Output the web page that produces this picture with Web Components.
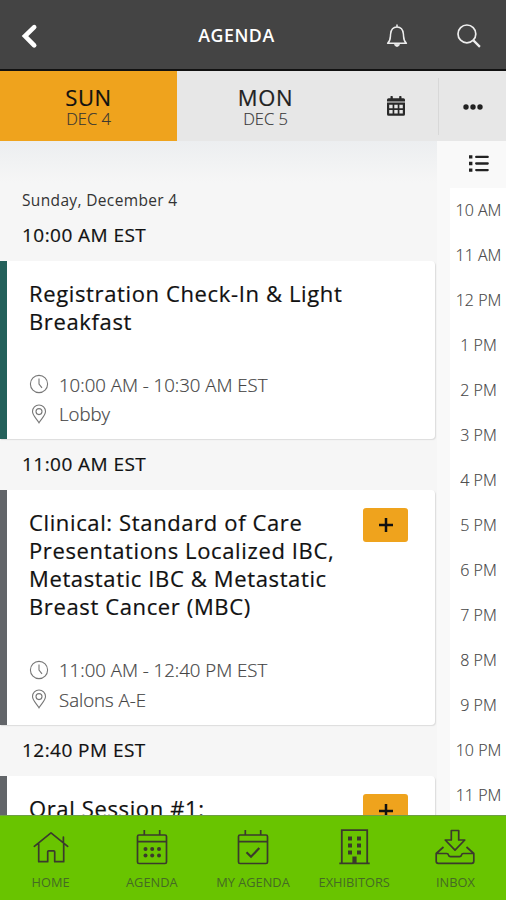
<!DOCTYPE html>
<html lang="en">
<head>
<meta charset="utf-8">
<title>Agenda</title>
<style>
html,body{margin:0;height:100%;overflow:hidden}
body{font-family:"Open Sans","Noto Sans",sans-serif;color:#111;background:#f6f6f6}
</style>
</head>
<body>
<agenda-app></agenda-app>
<script>
const ICONS = {
  back:'<svg width="18" height="28" viewBox="0 0 18 28"><path d="M13.200 5.200 4 14l9.200 9.400" fill="none" stroke="#fff" stroke-width="4.600" stroke-linecap="round"/></svg>',
  bell:'<svg width="24" height="26" viewBox="0 0 24 26" fill="none" stroke="#eee" stroke-width="1.500" stroke-linejoin="round"><path d="M12 1.500v2.200M2.600 20.200c3.400-3 2.600-5.800 3-9.200C6 6.300 8.400 3.900 12 3.900s6 2.400 6.400 7.100c.4 3.400-.4 6.200 3 9.200z"/><path d="M9.600 21.200c.2 3 4.600 3 4.800 0z" fill="#eee" stroke-width=".8"/></svg>',
  search:'<svg width="26" height="26" viewBox="0 0 26 26" fill="none" stroke="#eee"><circle cx="10.900" cy="10.900" r="8.900" stroke-width="1.700"/><path d="m17.400 17.400 6.500 6.500" stroke-width="2.200"/></svg>',
  cal:'<svg width="18" height="20" viewBox="0 0 18 20"><path fill="#292929" fill-rule="evenodd" d="M1.500 2.200h2V.6c0-.8 2.300-.8 2.300 0v1.600h6.400V.6c0-.8 2.300-.8 2.300 0v1.600h2q1.500 0 1.500 1.500V5.500H0V3.700q0-1.500 1.500-1.500zM0 6.500h18v11.700q0 1.500-1.500 1.500h-15Q0 19.700 0 18.200zM2.200 8.700v3.500h3.400V8.700zM7.300 8.700v3.500h3.400V8.700zM12.400 8.700v3.500h3.400V8.700zM2.200 14v3.500h3.400V14zM7.300 14v3.500h3.400V14zM12.400 14v3.500h3.400V14z"/></svg>',
  dots:'<svg width="20" height="6" viewBox="0 0 20 6" fill="#222"><circle cx="3" cy="3" r="2.700"/><circle cx="10" cy="3" r="2.700"/><circle cx="17" cy="3" r="2.700"/></svg>',
  list:'<svg width="20" height="17" viewBox="0 0 20 17" fill="#222"><path d="M0 .2h3.400v3.400H0zM0 6.800h3.400v3.400H0zM0 13.400h3.400v3.400H0z"/><path d="M7.200 1.900h11.500M7.200 8.500h11.500M7.200 15.100h11.500" stroke="#222" stroke-width="2.300" stroke-linecap="round"/></svg>',
  clock:'<svg width="20" height="20" viewBox="0 0 20 20" fill="none" stroke="#777" stroke-width="1.100"><circle cx="10" cy="10" r="8.600"/><path d="M10 4.500V10l3 3.800"/></svg>',
  pin:'<svg width="20" height="20" viewBox="0 0 20 20" fill="none" stroke="#777" stroke-width="1.100"><path d="M10 18.800C8 15 3.500 11.500 3.500 7.500a6.500 6.500 0 0 1 13 0C16.500 11.500 12 15 10 18.800z"/><circle cx="10" cy="7.600" r="3"/></svg>',
  plus:'<svg width="14" height="14" viewBox="0 0 14 14"><path d="M7 0v14M0 7h14" stroke="#111" stroke-width="2.500"/></svg>',
  home:'<svg width="38" height="38" viewBox="0 0 38 38" fill="none" stroke="#3b3a2c" stroke-width="1.700" stroke-linejoin="round" stroke-linecap="round"><path d="M2.300 17.300 19 3.800l16.700 13.500M6.700 14.500v18.200h9v-9.900q0-1 1-1h5q1 0 1 1v9.900h9V14.500M31.400 13.300V8"/></svg>',
  agenda:'<svg width="38" height="38" viewBox="0 0 38 38" fill="none" stroke="#3b3a2c" stroke-width="1.700"><rect x="4.500" y="6" width="29" height="28.500" rx="1.500"/><path d="M4.500 12.600h29M11.300 1v5M26.700 1v5"/><g fill="#3b3a2c" stroke="none"><circle cx="12.500" cy="20" r="2"/><circle cx="19.200" cy="20" r="2"/><circle cx="26" cy="20" r="2"/><circle cx="12.500" cy="26.600" r="2"/><circle cx="19.200" cy="26.600" r="2"/><circle cx="26" cy="26.600" r="2"/></g></svg>',
  mine:'<svg width="38" height="38" viewBox="0 0 38 38" fill="none" stroke="#3b3a2c" stroke-width="1.700"><rect x="4.500" y="6" width="29" height="28.500" rx="1.500"/><path d="M4.500 12.600h29M11.300 1v5M26.700 1v5"/><path d="m12.500 23.300 4.500 4.400 8.300-8.600" stroke-width="2.200"/></svg>',
  building:'<svg width="38" height="38" viewBox="0 0 38 38"><path d="M6.800 34V1.200h25.400V34M4.300 34.400h30.400" fill="none" stroke="#3b3a2c" stroke-width="1.800"/><path fill="#3b3a2c" d="M13 7.500h4v4h-4zM22 7.500h4v4h-4zM13 14.500h4v4h-4zM22 14.500h4v4h-4zM13 21.500h4v4h-4zM22 21.500h4v4h-4zM17.400 27.500h4.200v7h-4.200z"/></svg>',
  inbox:'<svg width="40" height="38" viewBox="0 0 40 38" fill="none" stroke="#3b3a2c" stroke-width="1.700" stroke-linejoin="round"><path d="M16.300 1.500h7.400v9.500h6.100L20 21.200 10.200 11h6.100zM8.500 18 1.200 24.500v7.800q0 2 2 2h33.600q2 0 2-2v-7.800L31.500 18M1.500 24.500h10.200q1.500 0 1.800 1.500.4 1.700 2 1.700h9q1.600 0 2-1.700.3-1.500 1.800-1.500h10.200"/></svg>'
};
function define(name, css, html){
  customElements.define(name, class extends HTMLElement{
    connectedCallback(){
      if(this.shadowRoot) return;
      const t=document.createElement('template');
      t.innerHTML='<style>*{box-sizing:border-box}:host{box-sizing:border-box}'+css+'</style>'+(typeof html==='function'?html(this):html);
      this.attachShadow({mode:'open'}).append(t.content.cloneNode(true));
    }
  });
}
define('ui-icon', ':host{display:flex;align-items:center;justify-content:center;flex:none}svg{display:block}', el=>ICONS[el.getAttribute('name')]);
define('app-header', `
:host{display:grid;grid-template-columns:59px 1fr 71px 74px;height:71px;background:#444;border-bottom:2px solid #111;align-items:center;color:#fff}
h1{margin:0 -53px 0 0;padding-top:1px;text-align:center;font-size:17.800px;line-height:24px;font-weight:600;letter-spacing:.5px}
ui-icon{margin-top:2px}`,
`<ui-icon name="back"></ui-icon><h1><slot></slot></h1><ui-icon name="bell"></ui-icon><ui-icon name="search"></ui-icon>`);
define('day-tab', `
:host{display:flex;flex-direction:column;align-items:center;padding-top:13px;color:#222}
:host([active]){background:#efa31d;color:#111}
b{font-weight:400;font-size:22px;line-height:26px;letter-spacing:.6px;-webkit-text-stroke:.2px}
small{font-size:16.500px;line-height:18px;font-weight:300;color:#333;-webkit-text-stroke:.15px}`,
`<b><slot name="day"></slot></b><small><slot></slot></small>`);
define('day-bar', `
:host{display:grid;grid-template-columns:177px 177px 84px 1fr;height:70px;background:#e7e7e7}
.more{display:grid;border-left:1px solid #d8d8d8;margin:7px 0 6px}`,
`<slot></slot><ui-icon name="cal"></ui-icon><div class="more"><ui-icon name="dots"></ui-icon></div>`);
define('time-heading', `
:host{display:flex;align-items:center;height:51px;padding:0 0 2px 22px;font-size:19px;letter-spacing:.45px;-webkit-text-stroke:.2px}`,`<slot></slot>`);
define('add-button', `:host{display:grid;width:45px;height:34px;border-radius:3px;background:#efa31d}`,`<ui-icon name="plus"></ui-icon>`);
define('session-card', `
:host{display:grid;grid-template-columns:1fr 45px;align-content:start;width:435px;background:#fff;border-left:7px solid var(--track,#626569);border-radius:0 4px 4px 0;box-shadow:1px 1px 1px #ddd;padding:18px 27px 10px 22px}
h2{margin:-.5px 0 .5px;font-weight:400;font-size:22px;line-height:28.200px;letter-spacing:.63px;white-space:pre;-webkit-text-stroke:.2px}
.m{grid-column:1/-1;margin-top:34px;display:grid;grid-template-columns:20px 1fr;column-gap:10px;grid-auto-rows:29.500px;align-items:center;font-size:18.600px;color:#444;font-weight:300;-webkit-text-stroke:.2px}`,
el=>`<h2><slot></slot></h2>${el.hasAttribute('add')?'<add-button></add-button>':'<i></i>'}
<div class="m"><ui-icon name="clock"></ui-icon><span><slot name="time"></slot></span><ui-icon name="pin"></ui-icon><span><slot name="place"></slot></span></div>`);
define('hour-rail', `
:host{display:flex;flex-direction:column;background:#f9f9f9}
.l{height:47px;display:grid;padding-left:15px;flex:none;padding-bottom:2px}
ol{list-style:none;margin:0 0 0 13px;padding:0;background:#fff;flex:none}
li{height:45px;display:grid;place-items:center;font-size:16px;color:#444;font-weight:300;-webkit-text-stroke:.15px;padding:0 0 2px 1px;white-space:nowrap}`,
()=>`<div class="l"><ui-icon name="list"></ui-icon></div><ol>${['10 AM','11 AM','12 PM','1 PM','2 PM','3 PM','4 PM','5 PM','6 PM','7 PM','8 PM','9 PM','10 PM','11 PM'].map(h=>`<li>${h}</li>`).join('')}</ol>`);
define('nav-item', `
:host{display:flex;flex-direction:column;align-items:center;padding-top:13px}
ui-icon{height:38px}
span{margin-top:5px;font-size:12.800px;line-height:20px;color:#456b24;white-space:nowrap}`,
el=>`<ui-icon name="${el.getAttribute('icon')}"></ui-icon><span><slot></slot></span>`);
define('bottom-nav', `:host{display:grid;grid-template-columns:repeat(5,1fr);height:85px;background:#69c400;border-top:1px solid #6e9e45}`,`<slot></slot>`);
define('agenda-app', `
:host{display:grid;grid-template-rows:71px 70px 674px 85px;height:900px;width:506px;overflow:hidden}
main{display:grid;grid-template-columns:437px 69px;overflow:hidden;min-height:0}
.list{overflow:hidden;background:linear-gradient(#eceef0,#f6f6f6 42px)}
.date{padding:45px 0 0 22px;font-size:15.500px;line-height:28px;letter-spacing:.35px;color:#333;height:69px}
hour-rail{overflow:hidden}`,
`<app-header>AGENDA</app-header>
<day-bar><day-tab active><span slot="day">SUN</span>DEC 4</day-tab><day-tab><span slot="day">MON</span>DEC 5</day-tab></day-bar>
<main><div class="list"><div class="date">Sunday, December 4</div>
<time-heading>10:00 AM EST</time-heading>
<session-card style="--track:#23605a;height:178px">Registration Check-In &amp; Light
Breakfast<span slot="time">10:00 AM - 10:30 AM EST</span><span slot="place">Lobby</span></session-card>
<time-heading>11:00 AM EST</time-heading>
<session-card add style="height:235px">Clinical: Standard of Care
Presentations Localized IBC,
Metastatic IBC &amp; Metastatic
Breast Cancer (MBC)<span slot="time">11:00 AM - 12:40 PM EST</span><span slot="place">Salons A-E</span></session-card>
<time-heading>12:40 PM EST</time-heading>
<session-card add style="height:235px">Oral Session #1:</session-card></div>
<hour-rail></hour-rail></main>
<bottom-nav><nav-item icon="home">HOME</nav-item><nav-item icon="agenda">AGENDA</nav-item><nav-item icon="mine">MY AGENDA</nav-item><nav-item icon="building">EXHIBITORS</nav-item><nav-item icon="inbox">INBOX</nav-item></bottom-nav>`);
</script>
</body>
</html>
